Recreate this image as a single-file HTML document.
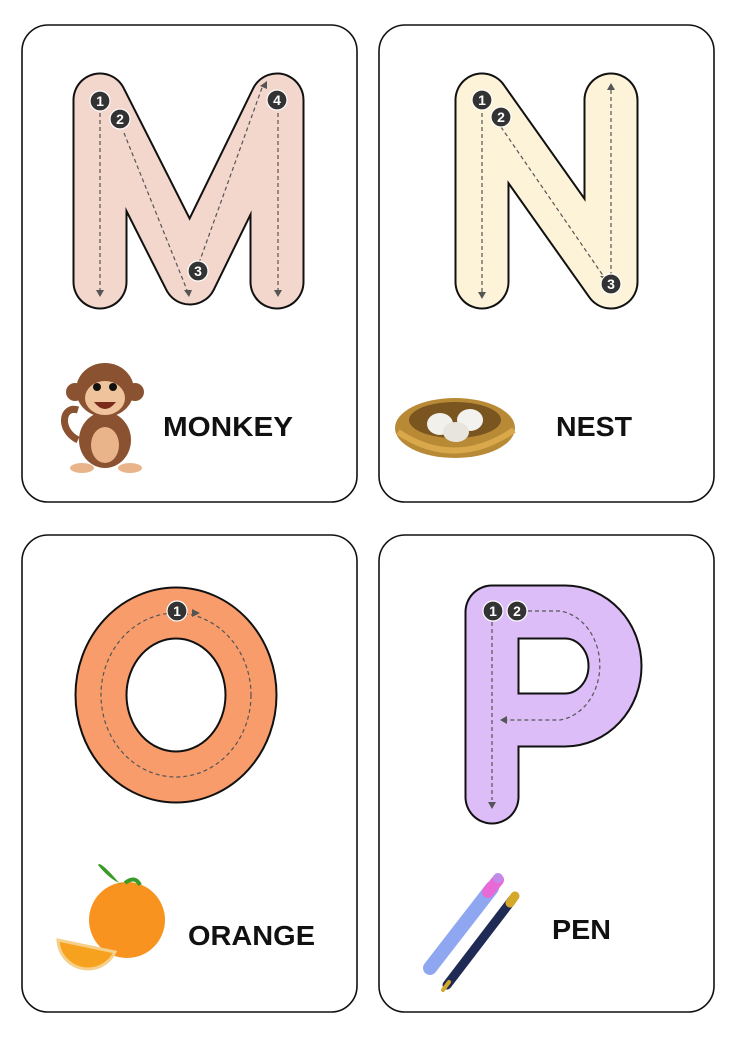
<!DOCTYPE html><html><head><style>
body{margin:0;background:#fff;width:736px;height:1040px;overflow:hidden}
svg{display:block}
</style></head><body>
<svg width="736" height="1040" viewBox="0 0 736 1040" xmlns="http://www.w3.org/2000/svg" font-family="Liberation Sans, sans-serif">
<g fill="#fff" stroke="#111" stroke-width="1.6">
<rect x="22" y="25" width="335" height="477" rx="26"/>
<rect x="379" y="25" width="335" height="477" rx="26"/>
<rect x="22" y="535" width="335" height="477" rx="26"/>
<rect x="379" y="535" width="335" height="477" rx="26"/>
</g>
<g fill="none" stroke-linecap="round" stroke-linejoin="round">
<path d="M100,100 L100,282 M100,100 L190,278 L277,100 L277,282" stroke="#111" stroke-width="55"/>
<path d="M100,100 L100,282 M100,100 L190,278 L277,100 L277,282" stroke="#f3d6cc" stroke-width="51"/>
<path d="M482,100 L482,282 M482,100 L611,282 L611,100" stroke="#111" stroke-width="55"/>
<path d="M482,100 L482,282 M482,100 L611,282 L611,100" stroke="#fdf3d8" stroke-width="51"/>
<ellipse cx="176" cy="695" rx="75" ry="82" stroke="#111" stroke-width="53"/>
<ellipse cx="176" cy="695" rx="75" ry="82" stroke="#f89c6c" stroke-width="49"/>
<path d="M492,797 L492,612 L565,612 A50 54 0 0 1 565,720 L492,720" stroke="#111" stroke-width="55"/>
<path d="M492,797 L492,612 L565,612 A50 54 0 0 1 565,720 L492,720" stroke="#dcbdf7" stroke-width="51"/>
</g>
<g fill="none" stroke="#555" stroke-width="1.2" stroke-dasharray="4,3">
<path d="M100,113 L100,290"/><path d="M124,133 L187,290"/><path d="M199,263 L263,85"/><path d="M278,113 L278,290"/>
<path d="M482,113 L482,292"/><path d="M501,127 L604,277"/><path d="M611,290 L611,88"/>
<ellipse cx="176" cy="695" rx="75" ry="82"/>
<path d="M492,622 L492,800"/><path d="M528,611 L560,611 A46 55 0 0 1 560,720 L506,720"/>
</g>
<g fill="#555">
<path d="M96,290 h8 l-4,7z"/><path d="M184,290 l8,0 -3,7z"/><path d="M274,290 h8 l-4,7z"/><path d="M260,86 l7,-5 0,8z"/>
<path d="M478,292 h8 l-4,7z"/><path d="M600,276 l7,0 -1,6z"/><path d="M607,90 h8 l-4,-7z"/>
<path d="M200,613 l-8,-4 0,8z"/><path d="M488,802 h8 l-4,7z"/><path d="M500,720 l7,-4 0,8z"/>
</g>
<g fill="#333" stroke="#fff" stroke-width="1.2">
<circle cx="100" cy="101" r="10"/><circle cx="120" cy="119" r="10"/><circle cx="198" cy="271" r="10"/><circle cx="277" cy="100" r="10"/>
<circle cx="482" cy="100" r="10"/><circle cx="501" cy="117" r="10"/><circle cx="611" cy="284" r="10"/>
<circle cx="177" cy="611" r="10"/><circle cx="493" cy="611" r="10"/><circle cx="517" cy="611" r="10"/>
</g>
<g fill="#fff" font-size="14" font-weight="bold" text-anchor="middle">
<text x="100" y="106">1</text><text x="120" y="124">2</text><text x="198" y="276">3</text><text x="277" y="105">4</text>
<text x="482" y="105">1</text><text x="501" y="122">2</text><text x="611" y="289">3</text>
<text x="177" y="616">1</text><text x="493" y="616">1</text><text x="517" y="616">2</text>
</g>
<g fill="#111" font-size="28" font-weight="bold">
<text x="163" y="436" textLength="130" lengthAdjust="spacingAndGlyphs">MONKEY</text>
<text x="556" y="436" textLength="76" lengthAdjust="spacingAndGlyphs">NEST</text>
<text x="188" y="945" textLength="127" lengthAdjust="spacingAndGlyphs">ORANGE</text>
<text x="552" y="939" textLength="59" lengthAdjust="spacingAndGlyphs">PEN</text>
</g>
<g>
<path d="M78,440 C58,430 62,405 78,410" fill="none" stroke="#8a5230" stroke-width="7"/>
<ellipse cx="105" cy="440" rx="26" ry="28" fill="#8a5230"/>
<ellipse cx="105" cy="445" rx="14" ry="18" fill="#e9b48a"/>
<ellipse cx="105" cy="390" rx="29" ry="27" fill="#8a5230"/>
<circle cx="75" cy="392" r="9" fill="#8a5230"/><circle cx="135" cy="392" r="9" fill="#8a5230"/>
<ellipse cx="105" cy="398" rx="20" ry="17" fill="#efc49c"/>
<circle cx="97" cy="387" r="4" fill="#111"/><circle cx="113" cy="387" r="4" fill="#111"/>
<path d="M94,402 Q105,416 116,402z" fill="#7a2a1a"/>
<ellipse cx="82" cy="468" rx="12" ry="5" fill="#e9b48a"/><ellipse cx="130" cy="468" rx="12" ry="5" fill="#e9b48a"/>
</g>
<g>
<ellipse cx="455" cy="428" rx="60" ry="30" fill="#b98a35"/>
<ellipse cx="455" cy="420" rx="46" ry="18" fill="#7a5520"/>
<ellipse cx="440" cy="424" rx="13" ry="11" fill="#f2f0ea"/><ellipse cx="470" cy="420" rx="13" ry="11" fill="#f4f2ee"/><ellipse cx="456" cy="432" rx="13" ry="10" fill="#e8e5de"/>
<path d="M398,432 Q455,470 514,430" fill="none" stroke="#d8a84a" stroke-width="6"/>
</g>
<g>
<circle cx="127" cy="920" r="38" fill="#f7931e"/>
<path d="M120,884 Q100,860 98,865 Q110,880 122,884z" fill="#3c9a2a"/>
<path d="M125,883 Q135,875 140,885" fill="none" stroke="#3c9a2a" stroke-width="4"/>
<path d="M58,940 A30 30 0 0 0 115,952 z" fill="#f7a21e" stroke="#f5d08a" stroke-width="3"/>
</g>
<g stroke-linecap="round">
<line x1="430" y1="968" x2="492" y2="888" stroke="#8fa6f0" stroke-width="14"/>
<line x1="488" y1="892" x2="498" y2="880" stroke="#e86ad6" stroke-width="12"/>
<circle cx="498" cy="878" r="5" fill="#c08ae8"/>
<line x1="447" y1="985" x2="512" y2="900" stroke="#1f2a55" stroke-width="9"/>
<line x1="443" y1="990" x2="449" y2="982" stroke="#d4a82a" stroke-width="4"/>
<line x1="510" y1="903" x2="515" y2="896" stroke="#d4a82a" stroke-width="9"/>
</g>
</svg>
</body></html>
